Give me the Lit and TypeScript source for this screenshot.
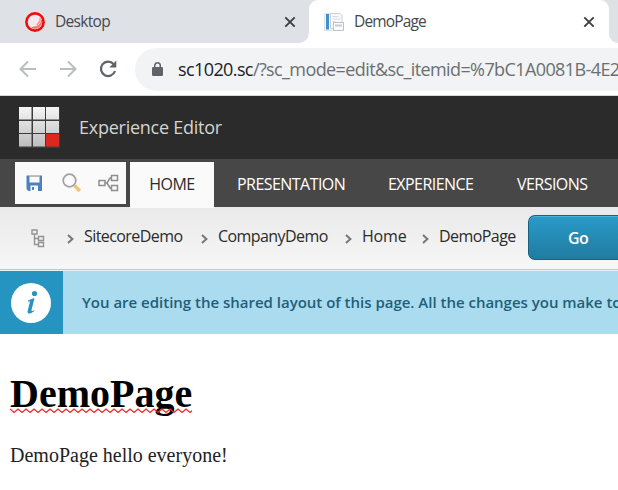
import { LitElement, html, css, svg } from "lit";
import { customElement } from "lit/decorators.js";

const close = html`<svg class="x" width="12" height="12" viewBox="0 0 12 12"><path d="M1.300 1.300 10.700 10.700M10.700 1.300 1.300 10.700" stroke="#3c4043" stroke-width="1.900" fill="none"/></svg>`;

@customElement("app-root")
export class AppRoot extends LitElement {
  static styles = css`
    :host { display: block; width: 618px; height: 490px; overflow: hidden; background: #fff; font-family: "Open Sans", sans-serif; }
    * { box-sizing: border-box; }
    svg { display: block; flex: none; }
    span { white-space: nowrap; flex: none; }
    .strip { height: 43px; display: flex; background: #fff; }
    .tab { height: 43px; display: flex; align-items: center; flex: none; font-size: 15.5px; color: #45484c; }
    .off { width: 309px; background: #dee1e6; border-bottom-right-radius: 10px; padding-left: 25px; }
    .on { width: 300px; background: #fff; padding-left: 15px; border-radius: 9px 9px 0 0; }
    .mid { background: linear-gradient(#dee1e6 50%, #fff 50%); flex: none; }
    .next { flex: 1; background: #dee1e6; border-bottom-left-radius: 10px; }
    .t1, .t2 { margin-left: 10px; width: 229px; padding-bottom: 2px; }
    .t1 { letter-spacing: -0.7px; }
    .t2 { letter-spacing: -0.85px; }
    .tools { height: 52px; display: flex; align-items: center; padding: 0 0 0 19px; background: #fff; }
    .fwd { margin-left: 22px; }
    .rel { margin-left: 22px; }
    .url { margin-left: 18px; flex: 1; min-width: 0; overflow: hidden; height: 43px; border-radius: 22px 0 0 22px; background: #f1f3f4; display: flex; align-items: center; padding-left: 17px; font-size: 18px; color: #6b6f73; }
    .addr { margin-left: 15px; letter-spacing: -0.6px; }
    .addr b { font-weight: 400; color: #202124; }
    .line { height: 1px; background: #d5d8db; }
    .head { height: 63px; background: #2b2b2b; display: flex; align-items: center; padding-left: 18px; color: #d4d4d4; font-size: 18px; }
    .title { margin-left: 19px; letter-spacing: -0.25px; padding-bottom: 2px; }
    .nav { height: 48px; background: #474747; display: flex; padding: 3px 0 0 15px; color: #fff; font-size: 16px; }
    .quick { width: 111px; height: 42px; background: #fafafa; display: flex; align-items: center; padding-left: 11px; flex: none; }
    .home { width: 84px; height: 46px; margin-left: 4px; background: #fafafa; color: #2b2b2b; text-align: center; line-height: 45px; flex: none; position: relative; letter-spacing: -0.5px; }
    .n { line-height: 45px; letter-spacing: -0.55px; }
    .crumbs { height: 62px; background: linear-gradient(#e9e9e9, #f7f7f7); display: flex; align-items: center; padding-left: 31px; font-size: 16px; color: #2b2b2b; }
    .c { margin-left: 10px; padding-bottom: 4px; letter-spacing: -0.57px; }
    .go { width: 100px; height: 45px; flex: none; margin: 0 0 2px 12px; border: 1px solid #17607f; border-right: 0; border-radius: 7px 0 0 7px; background: linear-gradient(#289bc8, #217ba0); box-shadow: inset 0 1px #4eb0d6; color: #fff; font-weight: 600; line-height: 44px; padding-left: 39px; letter-spacing: -0.5px; }
    .edge { height: 2px; background: linear-gradient(#c8c8c8 50%, #e8f2f6 50%); }
    .info { height: 63px; display: flex; background: #abdbee; align-items: center; color: #1f5f7a; font-weight: 600; font-size: 15px; overflow: hidden; }
    .badge { width: 63px; height: 63px; background: #2694c1; display: flex; align-items: center; padding-left: 11px; flex: none; }
    .disc { width: 40px; height: 40px; border-radius: 50%; background: #fff; }
    .msg { margin-left: 19px; padding-bottom: 2px; letter-spacing: -0.01px; }
    .page { font-family: "Liberation Serif", serif; color: #000; padding-left: 10px; }
    h1 { margin: 37px 0 0; font-size: 40px; line-height: 46px; height: 46px; width: 182px; position: relative; white-space: nowrap; }
    .wave { position: absolute; left: 0; top: 37px; }
    p { margin: 27px 0 0; font-size: 20px; line-height: 23px; color: #222; white-space: nowrap; }
  `;

  chevron(left: number) {
    return html`<svg style="margin-left:${left}px" width="7" height="11" viewBox="0 0 7 11"><path d="m1 2 4.400 4L1 10" fill="none" stroke="#777" stroke-width="2"/></svg>`;
  }

  render() {
    const zig = "M0 1" + Array.from({ length: 46 }, (_, i) => `L${(i + 1) * 4} ${i % 2 ? 1 : 4.5}`).join("");
    return html`
      <div class="strip">
        <div class="tab off">
          <svg width="20" height="20" viewBox="0 0 20 20"><circle cx="10" cy="10" r="8.600" fill="#f3e9ec" stroke="#f10d0d" stroke-width="2.600"/><path d="M16.500 8c.3 4-3 7-9.500 7.500 5 2.500 10-1.500 9.500-7.500z" fill="#f77" stroke="#f66" stroke-width="1"/><path d="M15 6v3l-3 4" fill="none" stroke="#f88" stroke-width="1.300"/></svg>
          <span class="t1">Desktop</span>${close}
        </div>
        <div class="mid"><div class="tab on">
          <svg width="20" height="20" viewBox="0 0 20 20"><path d="M.5 1.500h14v17H.5z" fill="#f4f7fa" stroke="#dce2e7"/><path d="M2 2h3v15.500H2z" fill="#3f91cc"/><path d="M6.500 1.500h9.500l2 2v13H6.500z" fill="#f8f9fa" stroke="#cbd0d5"/><path d="M8.500 4.500h6M8.500 7h8M8.500 9.500h3" stroke="#d5dade"/><path d="M9.500 10.500h10v8h-10z" fill="#fafafa" stroke="#bcc1c7"/><path d="M11 13.500h7" stroke="#c7cdd3" stroke-width="2"/></svg>
          <span class="t2">DemoPage</span>${close}
        </div></div>
        <div class="next"></div>
      </div>
      <div class="tools">
        <svg width="18" height="18" viewBox="0 0 18 18"><path d="M17 9H2M9 1.500 1.500 9 9 16.500" fill="none" stroke="#babcbe" stroke-width="2"/></svg>
        <svg class="fwd" width="18" height="18" viewBox="0 0 18 18"><path d="M1 9h15M9 1.500 16.500 9 9 16.500" fill="none" stroke="#babcbe" stroke-width="2"/></svg>
        <svg class="rel" width="18" height="18" viewBox="0 0 18 18"><path d="M14.500 4A7.200 7.200 0 1 0 16 11" fill="none" stroke="#5f6368" stroke-width="2.200"/><path d="M17.300 .5V7.500h-7z" fill="#5f6368"/></svg>
        <div class="url">
          <svg width="11" height="14" viewBox="0 0 11 14"><rect y="5" width="11" height="9" rx="1.200" fill="#5f6368"/><path d="M2.700 6V3.600a2.800 2.800 0 0 1 5.600 0V6" fill="none" stroke="#5f6368" stroke-width="1.500"/></svg>
          <span class="addr"><b>sc1020.sc</b>/?sc_mode=edit&amp;sc_itemid=%7bC1A0081B-4E2</span>
        </div>
      </div>
      <div class="line"></div>
      <div class="head">
        <svg width="42" height="42" viewBox="0 0 42 42"><defs><linearGradient id="g" gradientUnits="userSpaceOnUse" x1="0" y1="0" x2="0" y2="42"><stop stop-color="#f5f5f5"/><stop offset="1" stop-color="#bababa"/></linearGradient></defs><path d="M1 0h41v41H1z" fill="#3c3c3c"/>
          ${[0, 14, 27].map(y => [1, 15, 28].map(x => svg`<rect x=${x} y=${y} width=${x === 1 ? 12.5 : x === 15 ? 12 : 13} height=${y === 14 ? 12 : 12.5} fill=${x === 28 && y === 27 ? "#dd291d" : "url(#g)"}/>`))}
        </svg>
        <span class="title">Experience Editor</span>
      </div>
      <div class="nav">
        <div class="quick">
          <svg width="17" height="16" viewBox="0 0 17 16"><path d="M.5 .5h15.500v15.500H2.500l-2-2z" fill="#4b82bd"/><path d="M3.500 .5h10v7h-10zM4.500 10.500h7.500v5.500H4.500z" fill="#fafafa"/><path d="M3.500 .5h10v1.300h-10z" fill="#a5a9ad"/><path d="M6 12h2v3H6z" fill="#4b82bd"/></svg>
          <svg style="margin-left:19px" width="20" height="20" viewBox="0 0 20 20"><path d="m12.500 12.500 5.300 5.500" stroke="#edc478" stroke-width="3.600"/><circle cx="7.500" cy="7.500" r="6.300" fill="none" stroke="#a0a0a0" stroke-width="1.700"/></svg>
          <svg style="margin-left:16px" width="21" height="18" viewBox="0 0 21 18"><g fill="none" stroke="#8e8e8e" stroke-width="1.500"><path d="M1 6.500h6v5H1zM13.500 1.500h6v5h-6zM13.500 11.500h6v5h-6zM7 9h2l3-5h1.500M9 9l3 5h1.500"/></g></svg>
        </div>
        <div class="home">HOME</div>
        <span class="n" style="margin-left:23px;width:151px">PRESENTATION</span>
        <span class="n" style="width:129px">EXPERIENCE</span>
        <span class="n">VERSIONS</span>
      </div>
      <div class="crumbs">
        <svg width="14" height="19" viewBox="0 0 14 19"><g fill="none" stroke="#939393" stroke-width="1.400"><path d="M1 1h5v4H1zM7.500 7.500h5v4h-5zM7.500 13.500h5v4h-5zM3.500 5v10.500h4M3.500 9.500h4"/></g></svg>
        ${this.chevron(22)}<span class="c" style="width:99px">SitecoreDemo</span>
        ${this.chevron(18)}<span class="c" style="width:109px">CompanyDemo</span>
        ${this.chevron(18)}<span class="c" style="width:42px;letter-spacing:-.2px">Home</span>
        ${this.chevron(18)}<span class="c" style="width:77px">DemoPage</span>
        <div class="go">Go</div>
      </div>
      <div class="edge"></div>
      <div class="info">
        <div class="badge"><div class="disc"><svg width="40" height="40" viewBox="0 0 40 40"><circle cx="23.500" cy="10.500" r="2.600" fill="#2694c1"/><path d="M17 17.500q4-2 6.500-2.500L20.500 27q-.3 2 2.500.2l.5.8q-7 5-7 .5l2.500-10q-1 .2-2 0z" fill="#2694c1"/></svg></div></div>
        <span class="msg">You are editing the shared layout of this page. All the changes you make to</span>
      </div>
      <div class="page">
        <h1>DemoPage<svg class="wave" width="182" height="6" viewBox="0 0 182 6"><path d=${zig} fill="none" stroke="#f22" stroke-width="1.200"/></svg></h1>
        <p>DemoPage hello everyone!</p>
      </div>`;
  }
}
